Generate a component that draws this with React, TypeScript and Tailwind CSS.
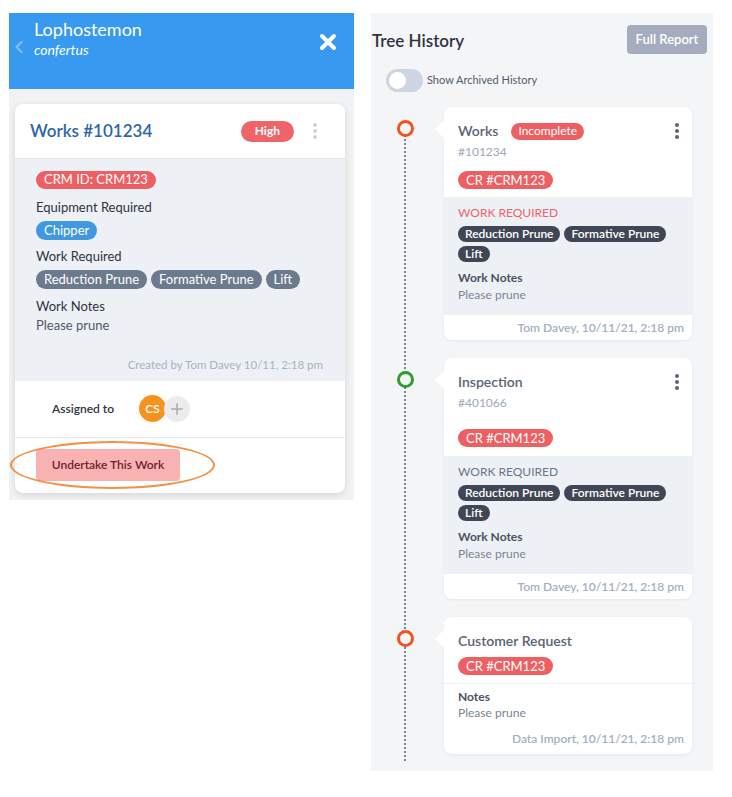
import React from "react";
import { ChevronLeft, X, Plus } from "lucide-react";

const font = { fontFamily: "Lato, 'Noto Sans', sans-serif" };

const Kebab = ({ className }: { className: string }) => (
  <div className={`flex flex-col gap-[2px] ${className}`}>
    <span className="h-[4px] w-[4px] rounded-full bg-current" />
    <span className="h-[4px] w-[4px] rounded-full bg-current" />
    <span className="h-[4px] w-[4px] rounded-full bg-current" />
  </div>
);

const Chip = ({ children }: { children: React.ReactNode }) => (
  <span className="inline-flex h-[16px] items-center rounded-full bg-[#3f4756] px-[7px] text-[12px] font-semibold leading-none text-white">
    {children}
  </span>
);

const CrBadge = () => (
  <span className="inline-flex h-[18px] items-center rounded-full bg-[#ee5f64] px-[8px] text-[13px] leading-none text-white">
    CR #CRM123
  </span>
);

const WorkSection = ({ red }: { red?: boolean }) => (
  <div className="bg-[#edf1f6] px-[14px] pb-[13px] pt-[9px]">
    <div className={`text-[12px] leading-[14px] ${red ? "text-[#f0626a]" : "text-[#6b7588]"}`}>
      WORK REQUIRED
    </div>
    <div className="mt-[6px] flex flex-wrap gap-[4px]">
      <Chip>Reduction Prune</Chip>
      <Chip>Formative Prune</Chip>
      <Chip>Lift</Chip>
    </div>
    <div className="mt-[9px] text-[12px] font-bold leading-[14px] text-[#4a5263]">Work Notes</div>
    <div className="mt-[3px] text-[12px] leading-[14px] text-[#7b8494]">Please prune</div>
  </div>
);

const Footer = ({ text }: { text: string }) => (
  <div className="flex h-[25px] items-center justify-end pr-[8px] text-[12px] font-semibold leading-none text-[#a4afbf]">
    {text}
  </div>
);

const Dot = ({ color }: { color: string }) => (
  <div className="flex w-[73px] shrink-0 justify-start pl-[26px] pt-[13px]">
    <span className={`relative z-10 h-[17px] w-[17px] rounded-full border-[3px] bg-[#f4f5f7] ${color}`} />
  </div>
);

const Card = ({ children }: { children: React.ReactNode }) => (
  <div className="relative w-[248px] rounded-lg bg-white shadow-[0_1px_3px_rgba(0,0,0,0.06)]">
    <span className="absolute left-[-9px] top-[13px] h-0 w-0 border-y-[9px] border-r-[9px] border-y-transparent border-r-white" />
    {children}
  </div>
);

export default function App() {
  return (
    <div className="flex h-[797px] w-[732px] items-start bg-white" style={font}>
      {/* left panel */}
      <div className="ml-[9px] mt-[13px] w-[345px] bg-[#f1f2f4]">
        <div className="flex h-[76px] items-start bg-[#3799ef] pr-[14px] pt-[5px] text-white">
          <ChevronLeft className="mt-[19px] h-[20px] w-[20px] text-[#83c0f6]" strokeWidth={2.5} />
          <div className="ml-[5px] leading-none">
            <div className="text-[18px] leading-[23px]">Lophostemon</div>
            <div className="text-[14px] italic leading-[18px]">confertus</div>
          </div>
          <X className="ml-auto mt-[12px] h-[24px] w-[24px]" strokeWidth={4} />
        </div>
        <div className="pb-[7px] pl-[6px] pr-[9px] pt-[15px]">
          <div className="rounded-lg bg-white shadow-[0_2px_6px_rgba(0,0,0,0.12)]">
            <div className="flex h-[54px] items-center pl-[15px] pr-[28px]">
              <span className="text-[17px] font-semibold text-[#2f66a8]">Works #101234</span>
              <span className="ml-auto inline-flex h-[21px] items-center rounded-full bg-[#ef6468] px-[14px] text-[12px] font-bold text-white">
                High
              </span>
              <Kebab className="ml-[19px] text-[#cbd3de]" />
            </div>
            <div className="border-t border-[#e6ebf1] bg-[#edf1f6] pb-[8px] pl-[21px] pr-[22px] pt-[11px] text-[13px]">
              <span className="inline-flex h-[18px] items-center rounded-full bg-[#ee5f64] px-[8px] text-[13px] leading-none text-white">
                CRM ID: CRM123
              </span>
              <div className="mt-[8px] leading-[18px] text-[#2d3340]">Equipment Required</div>
              <div className="mt-[5px] flex">
                <span className="inline-flex h-[19px] items-center rounded-full bg-[#4098e0] px-[8px] text-[13px] leading-none text-white">
                  Chipper
                </span>
              </div>
              <div className="mt-[7px] leading-[18px] text-[#2d3340]">Work Required</div>
              <div className="mt-[5px] flex gap-[4px]">
                {["Reduction Prune", "Formative Prune", "Lift"].map((c) => (
                  <span key={c} className="inline-flex h-[19px] items-center rounded-full bg-[#6c7a8e] px-[8px] text-[13px] leading-none text-white">
                    {c}
                  </span>
                ))}
              </div>
              <div className="mt-[8px] leading-[18px] text-[#2d3340]">Work Notes</div>
              <div className="mt-[1px] leading-[18px] text-[#4f5868]">Please prune</div>
              <div className="mt-[23px] text-right text-[11.5px] leading-[16px] text-[#a8b2c1]">
                Created by Tom Davey 10/11, 2:18 pm
              </div>
            </div>
            <div className="flex h-[57px] items-center border-b border-[#e6ebf1] pl-[37px]">
              <span className="text-[12px] font-semibold text-[#2d3340]">Assigned to</span>
              <span className="ml-[25px] inline-flex h-[27px] w-[27px] items-center justify-center rounded-full bg-[#f6921e] text-[12px] font-semibold text-white">
                CS
              </span>
              <span className="-ml-[2px] inline-flex h-[26px] w-[26px] items-center justify-center rounded-full bg-[#ececec] text-[#a9a9a9]">
                <Plus className="h-[18px] w-[18px]" strokeWidth={2} />
              </span>
            </div>
            <div className="relative h-[55px] pl-[21px] pt-[11px]">
              <span className="absolute left-[-5px] top-[3px] h-[48px] w-[205px] rounded-[50%] border-[2px] border-[#f39044]" />
              <span className="inline-flex h-[32px] w-[144px] items-center justify-center rounded-sm bg-[#f9b2b2] text-[12px] font-semibold text-[#6b2230]">
                Undertake This Work
              </span>
            </div>
          </div>
        </div>
      </div>

      {/* right panel */}
      <div className="ml-[17px] mt-[13px] h-[758px] w-[342px] bg-[#f4f5f7]">
        <div className="flex items-start pl-[1px] pr-[6px] pt-[12px]">
          <span className="mt-[3px] text-[17px] font-semibold text-[#2d3340]">Tree History</span>
          <span className="ml-auto inline-flex h-[29px] w-[80px] items-center justify-center rounded bg-[#a3adbe] text-[13px] font-semibold text-white">
            Full Report
          </span>
        </div>
        <div className="mt-[15px] flex items-center pl-[15px]">
          <span className="flex h-[23px] w-[37px] items-center rounded-full bg-[#cdd5e0] pl-[3px]">
            <span className="h-[17px] w-[17px] rounded-full bg-white" />
          </span>
          <span className="ml-[4px] text-[11px] text-[#525a68]">Show Archived History</span>
        </div>

        <div className="relative mt-[15px] flex flex-col gap-[18px] pb-[18px]">
          <span className="absolute bottom-[11px] left-[33px] top-[28px] border-l-2 border-dotted border-[#7a8391]" />

          <div className="flex">
            <Dot color="border-[#f4511e]" />
            <Card>
              <div className="px-[14px] pb-[8px] pt-[15px]">
                <div className="flex h-[18px] items-center">
                  <span className="text-[14px] font-semibold leading-[18px] text-[#5a6374]">Works</span>
                  <span className="ml-[13px] inline-flex h-[17px] items-center rounded-full bg-[#ee5f64] px-[7px] text-[12px] leading-none text-white">
                    Incomplete
                  </span>
                  <Kebab className="ml-auto mr-[-1px] text-[#5d6677]" />
                </div>
                <div className="mt-[5px] text-[12px] leading-[14px] text-[#a0a8b5]">#101234</div>
                <div className="mt-[12px] flex">
                  <CrBadge />
                </div>
              </div>
              <WorkSection red />
              <Footer text="Tom Davey, 10/11/21, 2:18 pm" />
            </Card>
          </div>

          <div className="flex">
            <Dot color="border-[#2f9e2f]" />
            <Card>
              <div className="px-[14px] pb-[9px] pt-[15px]">
                <div className="flex h-[18px] items-center">
                  <span className="text-[14px] font-semibold leading-[18px] text-[#5a6374]">Inspection</span>
                  <Kebab className="ml-auto mr-[-1px] text-[#5d6677]" />
                </div>
                <div className="mt-[5px] text-[12px] leading-[14px] text-[#a0a8b5]">#401066</div>
                <div className="mt-[19px] flex">
                  <CrBadge />
                </div>
              </div>
              <WorkSection />
              <Footer text="Tom Davey, 10/11/21, 2:18 pm" />
            </Card>
          </div>

          <div className="flex">
            <Dot color="border-[#f4511e]" />
            <Card>
              <div className="border-b border-[#edf0f4] px-[14px] pb-[8px] pt-[15px]">
                <div className="text-[14px] font-semibold leading-[18px] text-[#5a6374]">Customer Request</div>
                <div className="mt-[7px] flex">
                  <CrBadge />
                </div>
              </div>
              <div className="px-[14px] pt-[6px]">
                <div className="text-[12px] font-bold leading-[14px] text-[#4a5263]">Notes</div>
                <div className="mt-[2px] text-[12px] leading-[14px] text-[#7b8494]">Please prune</div>
              </div>
              <div className="flex h-[34px] items-center justify-end pr-[8px] pt-[4px] text-[12px] font-semibold leading-none text-[#a4afbf]">
                Data Import, 10/11/21, 2:18 pm
              </div>
            </Card>
          </div>
        </div>
      </div>
    </div>
  );
}
